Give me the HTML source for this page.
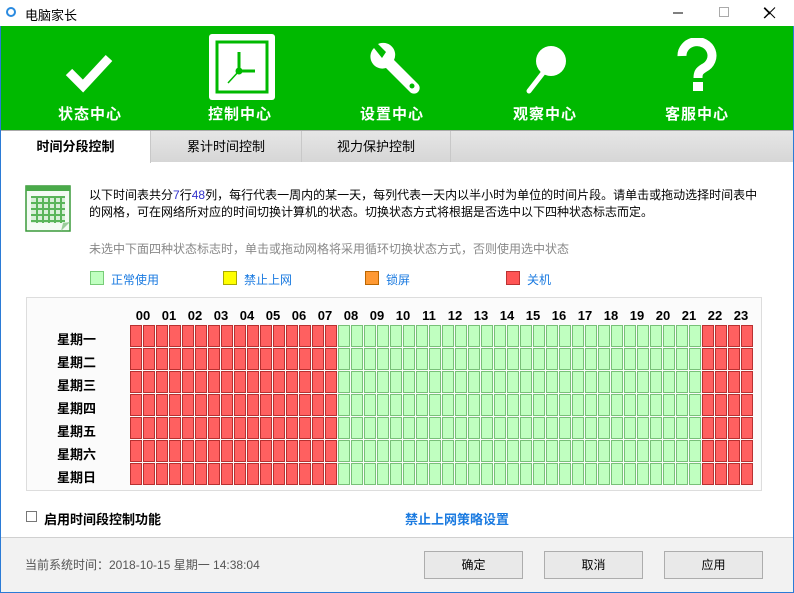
<!DOCTYPE html>
<html><head><meta charset="utf-8"><style>
*{margin:0;padding:0;box-sizing:border-box}
body{width:794px;height:593px;position:relative;overflow:hidden;background:#fff;font-family:"Liberation Sans","Noto Sans CJK SC",sans-serif;font-size:12px;color:#000}
.win{position:absolute;left:0;top:0;width:794px;height:593px;border:1px solid #2b7bd6;border-top:none}
.title{position:absolute;left:0;top:0;width:794px;height:26px;background:#fff}
.green{position:absolute;left:1px;top:26px;width:792px;height:104px;background:#00b900}
.nav{position:absolute;top:103px;width:120px;text-align:center;color:#fff;font-weight:bold;font-size:15px;letter-spacing:1px}
.tabs{position:absolute;left:1px;top:130px;width:792px;height:32px;background:linear-gradient(#e6e6e6,#d6d6d6);border-top:1px solid #aaa}
.tab{position:absolute;top:0;height:31px;line-height:31px;text-align:center;font-size:13px;border-right:1px solid #c8c8c8}
.abs{position:absolute}
.grid{position:absolute;left:26px;top:297px;width:736px;height:194px;border:1px solid #ddd;background:#fbfbfb}
.c{position:absolute;width:12px;height:22px}
.r{background:#ff6060;border:1px solid #b83030}
.g{background:#c0ffc0;border:1px solid #78c078}
.hl{position:absolute;top:10px;font-weight:bold;font-size:13px;width:26px;text-align:center}
.dl{position:absolute;left:30px;font-weight:bold;font-size:13px}
.btn{position:absolute;top:551px;width:99px;height:28px;border:1px solid #adadad;background:#e9e9e9;text-align:center;line-height:26px;font-size:12px}
</style></head><body>
<div class="win"></div>
<div class="title">
 <div class="abs" style="left:6px;top:7px;width:10px;height:10px;border-radius:50%;border:2px solid #2a8ae0"></div>
 <div class="abs" style="left:25px;top:5px;font-size:13px">电脑家长</div>
 <svg class="abs" style="left:670px;top:6px" width="100" height="14" viewBox="0 0 100 14"><line x1="3" y1="7" x2="13" y2="7" stroke="#000" stroke-width="1"/><rect x="49.5" y="1.5" width="9" height="9" fill="none" stroke="#aaa"/><path d="M94 2 L104 12 M104 2 L94 12" stroke="#000" stroke-width="1"/></svg>
 <svg class="abs" style="left:763px;top:6px" width="14" height="14" viewBox="0 0 14 14"><path d="M1.5 1.5 L12 12 M12 1.5 L1.5 12" stroke="#000" stroke-width="1"/></svg>
</div>
<div class="green">
 <svg class="abs" style="left:60px;top:20px" width="60" height="50" viewBox="0 0 60 50"><path d="M8 26 L22 40 L48 12" stroke="#fff" stroke-width="9" fill="none"/></svg>
 <svg class="abs" style="left:208px;top:8px" width="66" height="66" viewBox="0 0 66 66"><rect x="0" y="0" width="66" height="66" rx="3" fill="#fff"/><rect x="8" y="8" width="50" height="50" fill="none" stroke="#00b900" stroke-width="3"/><path d="M30 18 V37 H46" stroke="#00b900" stroke-width="3" fill="none"/><line x1="30" y1="37" x2="19" y2="49" stroke="#00b900" stroke-width="1.5"/><circle cx="30" cy="37" r="3.5" fill="#00b900"/></svg>
 <svg class="abs" style="left:365px;top:14px" width="56" height="56" viewBox="0 0 56 56"><path d="M8 8 a12 12 0 0 0 12 20 L44 52 a5 5 0 0 0 8 -8 L28 20 a12 12 0 0 0 -16 -16 l8 8 -4 6 z" fill="#fff"/><circle cx="46" cy="46" r="2.5" fill="#00b900"/></svg>
 <svg class="abs" style="left:520px;top:14px" width="50" height="56" viewBox="0 0 50 56"><circle cx="30" cy="21" r="15" fill="#fff"/><line x1="22" y1="33" x2="8" y2="51" stroke="#fff" stroke-width="5" stroke-linecap="round"/></svg>
 <svg class="abs" style="left:676px;top:12px" width="42" height="56" viewBox="0 0 42 56"><path d="M5 18 a15 14 0 1 1 22 12 c-5 3 -6 5 -6 10" stroke="#fff" stroke-width="9" fill="none"/><rect x="16" y="44" width="10" height="9" fill="#fff"/></svg>
</div>
<div class="nav" style="left:30px">状态中心</div>
<div class="nav" style="left:180px">控制中心</div>
<div class="nav" style="left:332px">设置中心</div>
<div class="nav" style="left:485px">观察中心</div>
<div class="nav" style="left:637px">客服中心</div>
<div class="tabs">
 <div class="tab" style="left:0;width:150px;background:#fff;font-weight:bold;height:32px">时间分段控制</div>
 <div class="tab" style="left:150px;width:151px">累计时间控制</div>
 <div class="tab" style="left:301px;width:149px">视力保护控制</div>
</div>
<svg class="abs" style="left:25px;top:185px" width="48" height="48" viewBox="0 0 48 48"><rect x="1" y="1" width="44" height="45" fill="#f4fbf4" stroke="#3a9a3a" stroke-width="1.5"/><rect x="1" y="1" width="44" height="5" fill="#4aaa4a"/><rect x="6" y="12" width="34" height="26" fill="#d8efd8"/><path d="M6 12h34M6 18h34M6 24h34M6 30h34M6 36h34M12 12v26M18 12v26M24 12v26M30 12v26M36 12v26" stroke="#5ab55a" stroke-width="2"/><path d="M36 46 L45 37 L38 38 Z" fill="#9c9"/></svg>
<div class="abs" style="left:89px;top:187px;line-height:17px;font-size:12px;width:680px">以下时间表共分<span style="color:#33c">7</span>行<span style="color:#33c">48</span>列，每行代表一周内的某一天，每列代表一天内以半小时为单位的时间片段。请单击或拖动选择时间表中<br>的网格，可在网络所对应的时间切换计算机的状态。切换状态方式将根据是否选中以下四种状态标志而定。</div>
<div class="abs" style="left:89px;top:240px;color:#888">未选中下面四种状态标志时，单击或拖动网格将采用循环切换状态方式，否则使用选中状态</div>
<div class="abs" style="left:90px;top:271px;width:14px;height:14px;background:#c0ffc0;border:1px solid #7c7"></div><div class="abs" style="left:111px;top:271px;color:#1a7ae0">正常使用</div>
<div class="abs" style="left:223px;top:271px;width:14px;height:14px;background:#ff0;border:1px solid #aa0"></div><div class="abs" style="left:244px;top:271px;color:#1a7ae0">禁止上网</div>
<div class="abs" style="left:365px;top:271px;width:14px;height:14px;background:#f93;border:1px solid #b60"></div><div class="abs" style="left:386px;top:271px;color:#1a7ae0">锁屏</div>
<div class="abs" style="left:506px;top:271px;width:14px;height:14px;background:#f55;border:1px solid #b33"></div><div class="abs" style="left:527px;top:271px;color:#1a7ae0">关机</div>
<div class="grid" id="grid"></div>
<div class="abs" style="left:26px;top:511px;width:11px;height:11px;border:1px solid #777"></div>
<div class="abs" style="left:44px;top:509px;font-weight:bold;font-size:13px">启用时间段控制功能</div>
<div class="abs" style="left:405px;top:509px;font-weight:bold;font-size:13px;color:#1a7ae0">禁止上网策略设置</div>
<div class="abs" style="left:1px;top:537px;width:792px;height:55px;background:#f2f2f2;border-top:1px solid #d0d0d0"></div>
<div class="abs" style="left:25px;top:556px;color:#555">当前系统时间：2018-10-15 星期一 14:38:04</div>
<div class="btn" style="left:424px">确定</div>
<div class="btn" style="left:544px">取消</div>
<div class="btn" style="left:664px">应用</div>
<script>
var g=document.getElementById('grid'),h='';
for(var i=0;i<24;i++){h+='<div class="hl" style="left:'+(103+i*26)+'px">'+(i<10?'0':'')+i+'</div>';}
var d=['一','二','三','四','五','六','日'];
for(var r=0;r<7;r++){h+='<div class="dl" style="top:'+(31+r*23)+'px">星期'+d[r]+'</div>';
for(var c=0;c<48;c++){h+='<div class="c '+(c>=16&&c<44?'g':'r')+'" style="left:'+(103+c*13)+'px;top:'+(27+r*23)+'px"></div>';}}
g.innerHTML=h;
</script>
</body></html>
